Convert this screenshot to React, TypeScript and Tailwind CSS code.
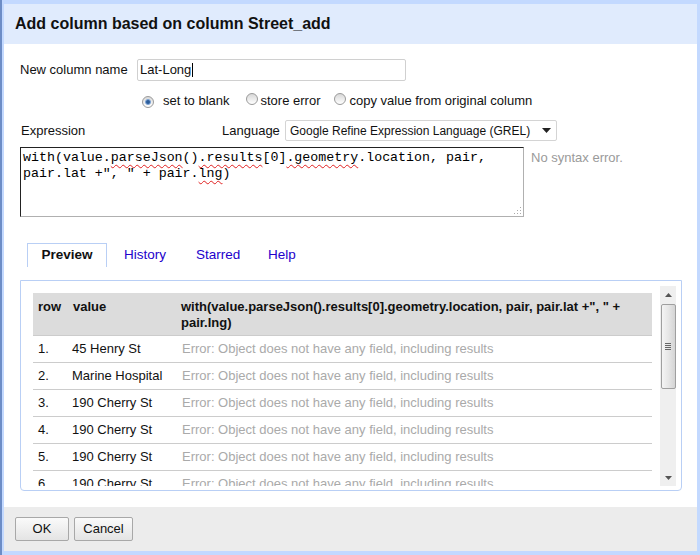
import React from "react";

const Radio = ({ checked }: { checked?: boolean }) => (
  <span className="inline-flex w-[12px] h-[12px] rounded-full border border-[#9a9a9a] bg-linear-to-b from-[#d8d8d8] to-[#ffffff] items-center justify-center shrink-0">
    {checked && (
      <span className="w-[6px] h-[6px] rounded-full bg-[#2c5d9a] border border-[#7fa6d8]" />
    )}
  </span>
);

const W = ({ children }: { children: React.ReactNode }) => (
  <span className="underline decoration-wavy decoration-[#e02020] decoration-1 underline-offset-[3px]">
    {children}
  </span>
);

const rows: [string, string][] = [
  ["1.", "45 Henry St"],
  ["2.", "Marine Hospital"],
  ["3.", "190 Cherry St"],
  ["4.", "190 Cherry St"],
  ["5.", "190 Cherry St"],
  ["6.", "190 Cherry St"],
];

export default function App() {
  return (
    <div className="w-[700px] h-[555px] bg-[#c3d9ff] border-l-2 border-[#6d8dc6] pt-[4px] pl-[2px] pr-[3px] pb-[4px] font-['Liberation_Sans',Arial,sans-serif] text-[13px] text-[#111]">
      <div className="flex flex-col h-full">
        {/* Title */}
        <div className="h-[40px] bg-[#e0ebfd] flex items-center pl-[11px]">
          <span className="text-[16px] font-bold text-[#111]">
            Add column based on column Street_add
          </span>
        </div>

        {/* Body */}
        <div className="flex-1 bg-white pl-[16px] pt-[15px]">
          {/* New column name */}
          <div className="flex items-center h-[22px]">
            <span className="w-[117px]">New column name</span>
            <div className="w-[269px] h-[22px] border border-[#d0d0d0] rounded-[2px] flex items-center pl-[2px] text-[13px]">
              Lat-Long<span className="w-px h-[14px] bg-black ml-px" />
            </div>
          </div>

          {/* Radios */}
          <div className="flex items-center h-[20px] mt-[10px]">
            <span className="ml-[122px]"><Radio checked /></span>
            <span className="ml-[9px]">set to blank</span>
            <span className="ml-[16px]"><Radio /></span>
            <span className="ml-[3px]">store error</span>
            <span className="ml-[14px]"><Radio /></span>
            <span className="ml-[3px]">copy value from original column</span>
          </div>

          {/* Expression / Language */}
          <div className="flex items-center h-[21px] mt-[9px]">
            <span className="w-[202px] pl-px">Expression</span>
            <span className="w-[63px]">Language</span>
            <div className="w-[272px] h-[21px] border border-[#d4d4d4] rounded-[2px] flex items-center pl-[4px] pr-[5px] justify-between whitespace-nowrap">
              <span className="text-[12px]">Google Refine Expression Language (GREL)</span>
              <svg width="9" height="5" viewBox="0 0 9 5">
                <path d="M0 0 L9 0 L4.5 5 Z" fill="#222" />
              </svg>
            </div>
          </div>

          {/* Textarea */}
          <div className="flex items-start mt-[6px]">
            <div className="relative w-[504px] h-[70px] border border-t-[#222] border-l-[#222] border-r-[#b0b0b0] border-b-[#b0b0b0] pl-[2px] pt-[2px] font-['Liberation_Mono','Courier_New',monospace] text-[13.3px] leading-[16px] text-black whitespace-pre">
              <div>
                with(value.<W>parseJson</W>()<W>.results</W>[0]<W>.geometry</W>.location, pair,
              </div>
              <div>
                pair.lat +", " + pair.<W>lng</W>)
              </div>
              <svg className="absolute right-[1px] bottom-[1px]" width="8" height="8" viewBox="0 0 8 8">
                <rect x="6" y="0" width="1" height="1" fill="#aaa" />
                <rect x="6" y="3" width="1" height="1" fill="#aaa" />
                <rect x="3" y="3" width="1" height="1" fill="#aaa" />
                <rect x="6" y="6" width="1" height="1" fill="#aaa" />
                <rect x="3" y="6" width="1" height="1" fill="#aaa" />
                <rect x="0" y="6" width="1" height="1" fill="#aaa" />
              </svg>
            </div>
            <span className="ml-[7px] mt-[1px] text-[#9a9a9a]">No syntax error.</span>
          </div>

          {/* Tabs */}
          <div className="flex items-end h-[24px] mt-[26px] pl-[7px] text-[13.5px]">
            <div className="w-[80px] h-[24px] border border-b-0 border-[#b9cff5] flex items-center justify-center font-bold text-[#111]">
              Preview
            </div>
            <div className="w-[89px] h-[24px] pl-[17px] flex items-center text-[#2200cc]">History</div>
            <div className="w-[72px] h-[24px] flex items-center text-[#2200cc]">Starred</div>
            <div className="h-[24px] flex items-center text-[#2200cc]">Help</div>
          </div>

          {/* Panel */}
          <div className="mt-[13px] w-[662px] h-[211px] border border-[#b9cff5] rounded-b-[4px] flex pt-[5px] pb-[4px]">
            <div className="w-[631px] h-[200px] overflow-hidden pl-[12px] pt-[7px]">
              <div className="w-[619px]">
                <div className="flex h-[43px] bg-[#dcdcdc] border-b border-[#cccccc] font-bold leading-[16px] pt-[6px]">
                  <div className="w-[35px] pl-[5px]">row</div>
                  <div className="w-[109px] pl-[5px]">value</div>
                  <div className="flex-1 pl-[4px] pr-[10px]">
                    with(value.parseJson().results[0].geometry.location, pair, pair.lat +", " + pair.lng)
                  </div>
                </div>
                {rows.map(([n, v], i) => (
                  <div key={i} className="flex items-center h-[27px] border-b border-[#cccccc]">
                    <div className="w-[35px] pl-[5px]">{n}</div>
                    <div className="w-[109px] pl-[4px]">{v}</div>
                    <div className="flex-1 pl-[5px] text-[#aaaaaa]">
                      Error: Object does not have any field, including results
                    </div>
                  </div>
                ))}
              </div>
            </div>
            {/* Scrollbar */}
            <div className="ml-[8px] w-[16px] h-[200px] bg-[#efefef] flex flex-col items-center">
              <div className="h-[17px] w-full flex items-center justify-center">
                <svg width="7" height="4" viewBox="0 0 7 4"><path d="M0 4 L7 4 L3.5 0 Z" fill="#555" /></svg>
              </div>
              <div className="mt-[1px] w-[15px] h-[85px] rounded-[2px] border border-[#9f9f9f] bg-linear-to-r from-[#f4f4f4] via-[#e6e6e6] to-[#d4d4d4] flex items-center justify-center">
                <div className="flex flex-col gap-[1px]">
                  <span className="block w-[6px] h-px bg-[#666]" />
                  <span className="block w-[6px] h-px bg-[#666]" />
                  <span className="block w-[6px] h-px bg-[#666]" />
                  <span className="block w-[6px] h-px bg-[#666]" />
                </div>
              </div>
              <div className="flex-1" />
              <div className="h-[17px] w-full flex items-center justify-center">
                <svg width="7" height="4" viewBox="0 0 7 4"><path d="M0 0 L7 0 L3.5 4 Z" fill="#555" /></svg>
              </div>
            </div>
          </div>
        </div>

        {/* Footer */}
        <div className="h-[44px] bg-[#ececec] flex items-start pl-[11px] pt-[10px] gap-[5px]">
          <button className="w-[54px] h-[24px] border border-[#a8a8a8] rounded-[2px] bg-linear-to-b from-[#fafafa] to-[#e4e4e4] text-[13px] text-[#111]">
            OK
          </button>
          <button className="w-[59px] h-[24px] border border-[#a8a8a8] rounded-[2px] bg-linear-to-b from-[#fafafa] to-[#e4e4e4] text-[13px] text-[#111]">
            Cancel
          </button>
        </div>
      </div>
    </div>
  );
}
